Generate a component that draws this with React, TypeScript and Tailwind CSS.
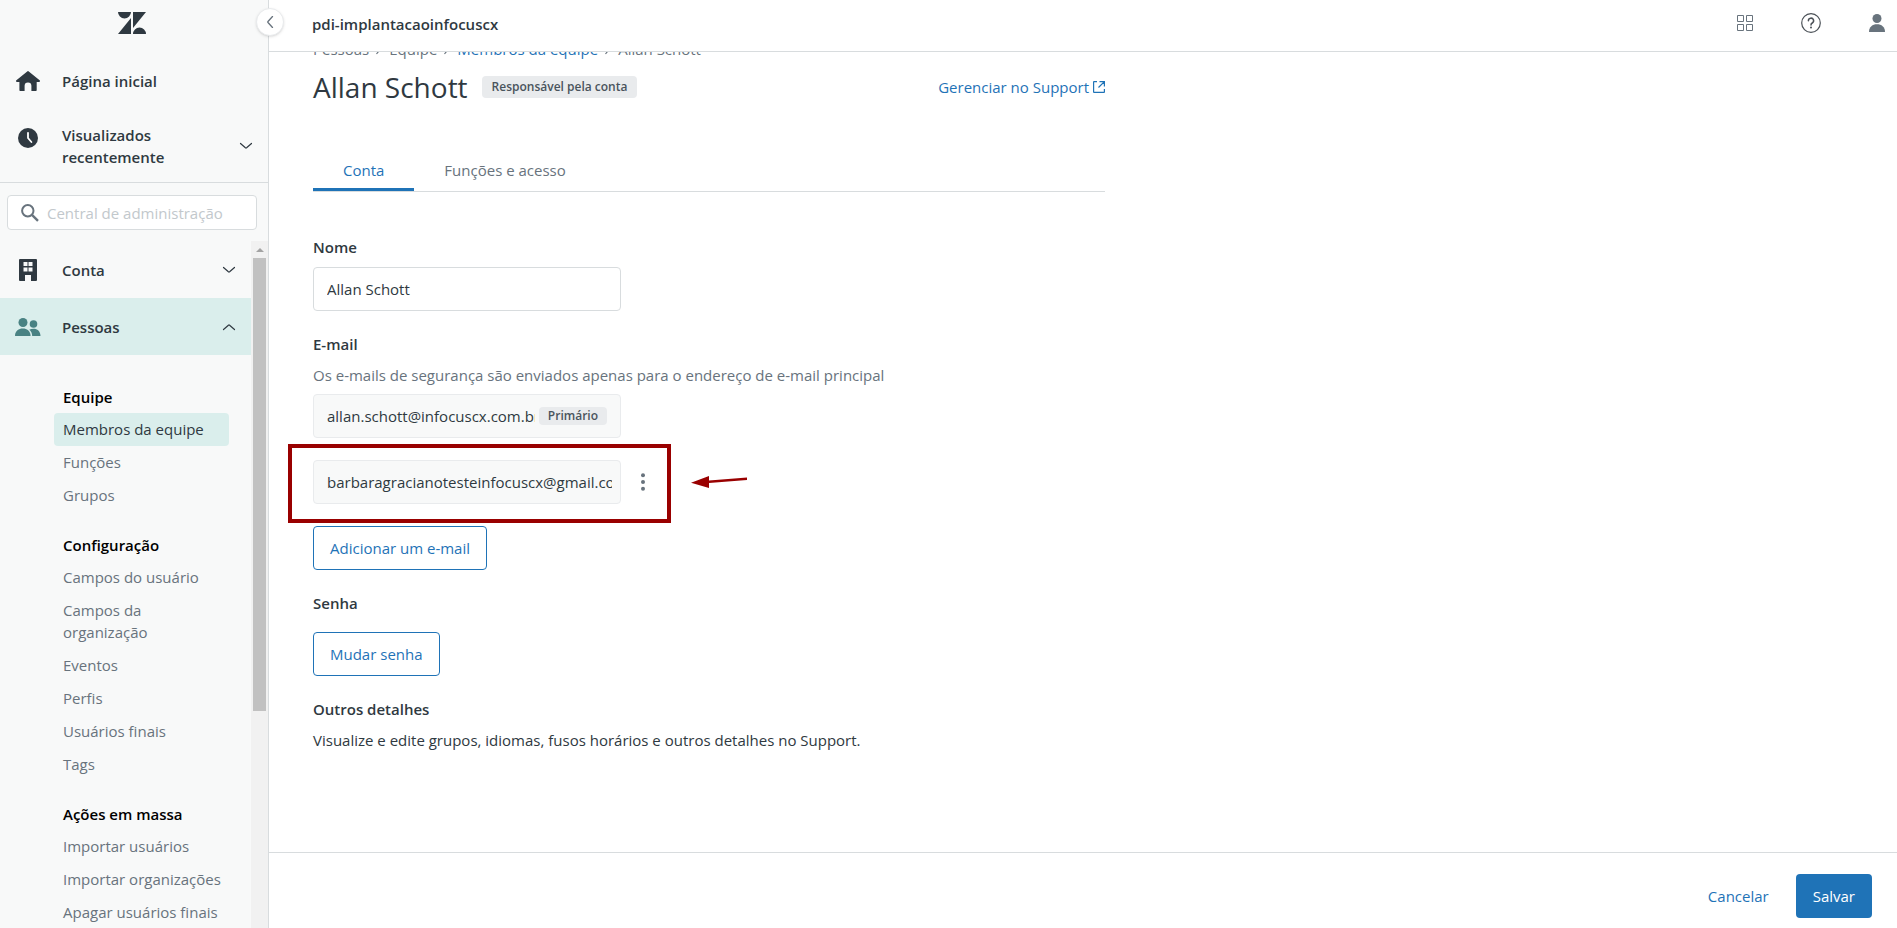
import type { ReactNode } from "react";

interface NavGroup {
  title: string;
  items: string[];
}

const NAV_GROUPS: NavGroup[] = [
  { title: "Equipe", items: ["Membros da equipe", "Funções", "Grupos"] },
  {
    title: "Configuração",
    items: ["Campos do usuário", "Campos da organização", "Eventos", "Perfis", "Usuários finais", "Tags"],
  },
  {
    title: "Ações em massa",
    items: ["Importar usuários", "Importar organizações", "Apagar usuários finais"],
  },
];

const ACTIVE_ITEM = "Membros da equipe";

function Chevron({ up = false }: { up?: boolean }) {
  return (
    <svg className="w-3.5 h-2 shrink-0" viewBox="0 0 14 8" fill="none" stroke="currentColor" aria-hidden="true">
      <path
        d={up ? "M1.500 6.500l4.900-4.300a1 1 0 011.200 0l4.900 4.300" : "M1.500 1.500l4.900 4.300a1 1 0 001.200 0l4.900-4.300"}
        strokeWidth={1.2}
        strokeLinecap="round"
      />
    </svg>
  );
}

function Logo() {
  return (
    <svg className="w-7 h-[22px]" viewBox="0 0 28 22" fill="currentColor" aria-label="Zendesk">
      <path d="M13 6v16H0zM13 0a6.500 6.500 0 01-13 0zM15 22a6.500 6.500 0 0113 0zM15 16V0h13z" />
    </svg>
  );
}

function HomeIcon() {
  return (
    <svg className="w-6 h-5" viewBox="0 0 24 20" fill="currentColor" aria-hidden="true">
      <path d="M11.200.4a1.200 1.200 0 011.600 0l10.800 8.800c.8.7.4 1.700-.6 1.700h-2.300v8c0 .6-.4 1.100-1 1.100h-4.300v-5.200a3.400 3.400 0 00-6.800 0V20H4.400c-.6 0-1-.5-1-1.100v-8H1c-1 0-1.400-1-.6-1.700z" />
    </svg>
  );
}

function ClockIcon() {
  return (
    <svg className="w-5 h-5" viewBox="0 0 20 20" aria-hidden="true">
      <circle cx="10" cy="10" r="10" fill="currentColor" />
      <path d="M10 4.800V10l3.400 4" fill="none" stroke="#fff" strokeWidth={1.800} strokeLinecap="round" />
    </svg>
  );
}

function BuildingIcon() {
  return (
    <svg className="w-[18px] h-[22px]" viewBox="0 0 18 22" fill="currentColor" aria-hidden="true">
      <path
        fillRule="evenodd"
        d="M1 0h16a1 1 0 011 1v20a1 1 0 01-1 1h-5v-6H6v6H1a1 1 0 01-1-1V1a1 1 0 011-1zM4.500 3v4h4V3zm5 0v4h4V3zM4.500 8.500v4h4v-4zm5 0v4h4v-4z"
      />
    </svg>
  );
}

function PeopleIcon() {
  return (
    <svg className="w-[26px] h-[18px]" viewBox="0 0 26 18" fill="currentColor" aria-hidden="true">
      <circle cx="8" cy="4.500" r="4.500" />
      <circle cx="18.500" cy="6" r="3.800" />
      <path d="M0 17.400C.4 13 3.600 10.600 7.800 10.600s7.400 2.400 7.800 6.800c0 .4-.2.600-.6.600H.6c-.4 0-.6-.2-.6-.6zM14.300 11.700c1.200-.7 2.600-1 4.200-1 4 0 6.700 2.500 7 6.700 0 .4-.2.600-.6.600h-7.700c0-2.600-1-4.700-2.900-6.300z" />
    </svg>
  );
}

function SearchIcon() {
  return (
    <svg className="w-[18px] h-[18px] shrink-0" viewBox="0 0 18 18" fill="none" stroke="currentColor" aria-hidden="true">
      <circle cx="6.800" cy="6.800" r="5.700" strokeWidth={2} />
      <path d="M11.200 11.200l5.800 5.600" strokeWidth={2.400} />
    </svg>
  );
}

function NavRow({ icon, label, open = false }: { icon: ReactNode; label: string; open?: boolean }) {
  return (
    <button
      type="button"
      aria-expanded={open}
      className={`flex items-center w-full h-[57px] pr-[15px] text-left ${open ? "bg-[#daeeec]" : ""}`}
    >
      <span className={`flex justify-center w-14 mr-1.5 ${open ? "text-[#498283]" : ""}`}>{icon}</span>
      <span className="flex-1 font-semibold">{label}</span>
      <Chevron up={open} />
    </button>
  );
}

function Sidebar() {
  return (
    <aside className="relative flex flex-col w-[269px] shrink-0 bg-[#f8f9f9] border-r border-[#d8dcde]">
      <button
        type="button"
        aria-label="Recolher menu"
        className="absolute z-10 top-2 -right-4 flex items-center justify-center w-7 h-7 rounded-full bg-white border border-[#e9ebed] shadow-sm text-[#68737d]"
      >
        <svg className="w-2 h-3" viewBox="0 0 8 12" fill="none" stroke="currentColor" aria-hidden="true">
          <path d="M6.500.5L2 5.500a.8.8 0 000 1l4.500 5" strokeWidth={1.300} strokeLinecap="round" />
        </svg>
      </button>

      <div className="flex justify-center pt-3 pr-1">
        <Logo />
      </div>

      <div className="border-b border-[#d8dcde] pt-[19px] pb-3.5">
        <a href="#inicio" className="flex items-center h-14">
          <span className="flex justify-center w-14 mr-1.5">
            <HomeIcon />
          </span>
          <span className="font-semibold">Página inicial</span>
        </a>
        <button type="button" className="flex items-center w-full pt-[15px] pr-[15px] text-left">
          <span className="flex justify-center self-start w-14 pt-1 mr-1.5">
            <ClockIcon />
          </span>
          <span className="flex-1 pr-10 font-semibold">Visualizados recentemente</span>
          <Chevron />
        </button>
      </div>

      <div className="pt-3 pb-[11px] pl-[7px] pr-[11px]">
        <label className="flex items-center gap-2 h-[35px] px-[13px] rounded border border-[#d8dcde] bg-white text-[#68737d]">
          <SearchIcon />
          <input
            type="search"
            aria-label="Central de administração"
            placeholder="Central de administração"
            className="w-full min-w-0 outline-none placeholder:text-[#c2c8cc]"
          />
        </label>
      </div>

      <div className="flex flex-1 min-h-0">
        <nav className="flex-1 overflow-hidden">
          <NavRow icon={<BuildingIcon />} label="Conta" />
          <NavRow icon={<PeopleIcon />} label="Pessoas" open />
          <div className="flex flex-col gap-[22px] pt-[31px] pl-[54px] pr-[22px]">
            {NAV_GROUPS.map((group) => (
              <section key={group.title}>
                <h2 className="px-[9px] mb-[5px] font-semibold text-black">{group.title}</h2>
                <ul>
                  {group.items.map((item) => (
                    <li key={item}>
                      <a
                        href="#nav"
                        className={`block px-[9px] pt-[5px] pb-1.5 rounded ${
                          item === ACTIVE_ITEM ? "bg-[#daeeec] text-[#2f3941]" : "text-[#68737d]"
                        } ${item === "Campos da organização" ? "pr-12" : "whitespace-nowrap"}`}
                      >
                        {item}
                      </a>
                    </li>
                  ))}
                </ul>
              </section>
            ))}
          </div>
        </nav>
        {/* scrollbar */}
        <div className="flex flex-col items-center w-[17px] bg-[#f1f1f1]" aria-hidden="true">
          <div className="flex items-center justify-center h-[17px]">
            <svg className="w-2 h-1" viewBox="0 0 8 4" fill="#a3a3a3">
              <path d="M4 0l4 4H0z" />
            </svg>
          </div>
          <div className="w-[13px] h-[66%] bg-[#c1c1c1]" />
        </div>
      </div>
    </aside>
  );
}

function TopBar() {
  return (
    <header className="flex items-center justify-between h-[52px] shrink-0 pl-[43px] pr-3 pb-1 bg-white border-b border-[#d8dcde]">
      <span className="font-semibold">pdi-implantacaoinfocuscx</span>
      <div className="flex items-center gap-12 pb-0.5 text-[#68737d]">
        <button type="button" aria-label="Produtos">
          <svg className="w-4 h-4" viewBox="0 0 16 16" fill="none" stroke="currentColor">
            <path d="M.5.5h6v6h-6zM9.500.5h6v6h-6zM.5 9.500h6v6h-6zM9.500 9.500h6v6h-6z" />
          </svg>
        </button>
        <button type="button" aria-label="Ajuda">
          <svg className="w-5 h-5" viewBox="0 0 20 20" fill="none" stroke="#4b5157">
            <circle cx="10" cy="10" r="9.300" strokeWidth={1.200} />
            <path d="M7.400 7.800a2.600 2.600 0 113.900 2.200c-.9.500-1.300.9-1.300 1.900" strokeWidth={1.500} strokeLinecap="round" />
            <circle cx="10" cy="14.400" r="1" fill="#4b5157" stroke="none" />
          </svg>
        </button>
        <button type="button" aria-label="Perfil">
          <svg className="w-4 h-[18px]" viewBox="0 0 16 18" fill="currentColor">
            <circle cx="8" cy="4.500" r="4.500" />
            <path d="M0 17.400C.2 13 3.400 10.300 8 10.300s7.800 2.700 8 7.100c0 .4-.2.600-.6.600H.6c-.4 0-.6-.2-.6-.6z" />
          </svg>
        </button>
      </div>
    </header>
  );
}

function BreadcrumbArrow() {
  return (
    <svg className="w-2 h-3" viewBox="0 0 8 12" fill="none" stroke="currentColor" aria-hidden="true">
      <path d="M1.500 1l4 5-4 5" strokeWidth={1.200} />
    </svg>
  );
}

function OutlineButton({ children }: { children: ReactNode }) {
  return (
    <button type="button" className="h-11 px-4 rounded border border-[#1f73b7] text-[#1f73b7]">
      {children}
    </button>
  );
}

function UserForm() {
  return (
    <form className="pt-11">
      <label htmlFor="nome" className="block font-semibold">
        Nome
      </label>
      <input
        id="nome"
        defaultValue="Allan Schott"
        className="block w-[308px] h-11 mt-[9px] px-[13px] rounded border border-[#d8dcde] outline-none"
      />

      <label htmlFor="email" className="block mt-[22px] font-semibold">
        E-mail
      </label>
      <p className="mt-[9px] text-[#68737d]">
        Os e-mails de segurança são enviados apenas para o endereço de e-mail principal
      </p>
      <div className="flex items-center gap-1 w-[308px] h-11 mt-2 px-[13px] rounded border border-[#e9ebed] bg-[#f8f9f9]">
        <input
          id="email"
          readOnly
          value="allan.schott@infocuscx.com.br"
          className="flex-1 min-w-0 outline-none"
        />
        <span className="px-[9px] rounded-sm bg-[#e9ebed] text-xs leading-[18px] font-semibold text-[#49545c]">
          Primário
        </span>
      </div>

      <div className="relative flex items-center mt-[22px]">
        <input
          readOnly
          aria-label="E-mail secundário"
          value="barbaragracianotesteinfocuscx@gmail.com"
          className="w-[308px] h-11 pl-[13px] pr-2 rounded border border-[#e9ebed] bg-[#f8f9f9] outline-none"
        />
        <button type="button" aria-label="Opções do e-mail" className="flex justify-center w-11 h-11 items-center">
          <svg className="w-1 h-[18px]" viewBox="0 0 4 18" fill="#68737d">
            <circle cx="2" cy="2.300" r="2" />
            <circle cx="2" cy="9" r="2" />
            <circle cx="2" cy="15.700" r="2" />
          </svg>
        </button>
        {/* highlight and pointer */}
        <div className="absolute -left-[25px] -top-4 w-[383px] h-[79px] border-4 border-[#990000] pointer-events-none" />
        <svg className="absolute left-[378px] top-4 w-14 h-3" viewBox="0 0 56 12" aria-hidden="true">
          <path d="M0 6.800L18 0v4.500L56 1.500v2.500L18 7v5z" fill="#990000" />
        </svg>
      </div>

      <div className="mt-[22px]">
        <OutlineButton>Adicionar um e-mail</OutlineButton>
      </div>

      <h3 className="mt-[22px] mb-[18px] font-semibold">Senha</h3>
      <OutlineButton>Mudar senha</OutlineButton>

      <h3 className="mt-[22px] mb-[9px] font-semibold">Outros detalhes</h3>
      <p>Visualize e edite grupos, idiomas, fusos horários e outros detalhes no Support.</p>
    </form>
  );
}

export default function App() {
  return (
    <div className="flex h-screen overflow-hidden bg-white font-['Segoe_UI','Open_Sans',sans-serif] text-[15px] leading-[22px] text-[#2f3941]">
      <Sidebar />
      <div className="flex flex-col flex-1 min-w-0">
        <TopBar />
        <main className="flex-1 min-h-0 overflow-hidden pl-11 pr-6">
          <div className="max-w-[792px] -mt-[14px]">
            <div className="flex items-center gap-1.5 text-[#68737d]">
              <span>Pessoas</span>
              <BreadcrumbArrow />
              <span>Equipe</span>
              <BreadcrumbArrow />
              <a href="#membros" className="text-[#1f73b7]">
                Membros da equipe
              </a>
              <BreadcrumbArrow />
              <span>Allan Schott</span>
            </div>
            <div className="flex items-center justify-between mt-[9px]">
              <div className="flex items-center gap-3.5">
                <h1 className="text-[28px] leading-9">Allan Schott</h1>
                <span className="px-2.5 rounded-sm bg-[#e9ebed] text-xs leading-[22px] font-semibold text-[#49545c]">
                  Responsável pela conta
                </span>
              </div>
              <a href="#support" className="flex items-center gap-1 text-[#1f73b7]">
                Gerenciar no Support
                <svg className="w-3 h-3" viewBox="0 0 12 12" fill="none" stroke="currentColor" aria-hidden="true">
                  <path d="M4 .6H1.100a.5.5 0 00-.5.5v9.800c0 .3.2.500.5.500h9.800c.3 0 .5-.2.5-.5V8M6.500.6h4.900v4.900M11.400.6L5.500 6.500" strokeWidth={1.200} />
                </svg>
              </a>
            </div>
            <div role="tablist" className="flex mt-[49px] border-b border-[#d8dcde]">
              <button
                type="button"
                role="tab"
                aria-selected="true"
                className="px-[30px] pt-[5px] pb-[7px] border-b-3 border-[#1f73b7] text-[#1f73b7]"
              >
                Conta
              </button>
              <button type="button" role="tab" aria-selected="false" className="px-[30px] pt-[5px] pb-2.5 text-[#68737d]">
                Funções e acesso
              </button>
            </div>
            <UserForm />
          </div>
        </main>
        <footer className="flex items-center justify-end gap-[27px] h-[76px] shrink-0 pt-[10px] pr-[25px] border-t border-[#d8dcde]">
          <button type="button" className="text-[#1f73b7]">
            Cancelar
          </button>
          <button type="button" className="h-11 px-[17px] rounded bg-[#1f73b7] text-white">
            Salvar
          </button>
        </footer>
      </div>
    </div>
  );
}
